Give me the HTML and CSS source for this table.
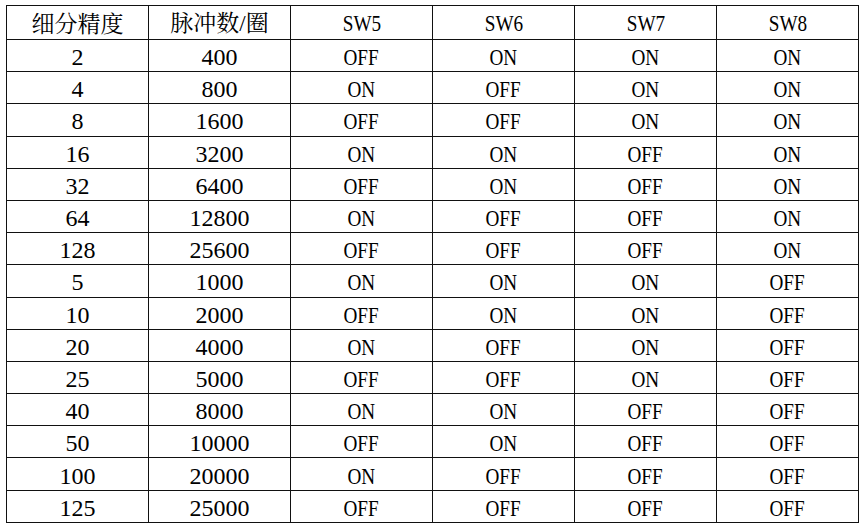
FILE: index.html
```html
<!DOCTYPE html>
<html>
<head>
<meta charset="utf-8">
<title>细分精度表</title>
<link rel="stylesheet" href="styles.css">
</head>
<body>
<table class="grid">
  <colgroup><col><col><col><col><col><col></colgroup>
  <thead>
    <tr class="head"><th class="zh">细分精度</th><th class="zh">脉冲数<span class="sl">/</span>圈</th><th><span class="c">SW5</span></th><th><span class="c">SW6</span></th><th><span class="c">SW7</span></th><th><span class="c">SW8</span></th></tr>
  </thead>
  <tbody>
    <tr><td>2</td><td>400</td><td><span class="c">OFF</span></td><td><span class="c">ON</span></td><td><span class="c">ON</span></td><td><span class="c">ON</span></td></tr>
    <tr><td>4</td><td>800</td><td><span class="c">ON</span></td><td><span class="c">OFF</span></td><td><span class="c">ON</span></td><td><span class="c">ON</span></td></tr>
    <tr><td>8</td><td>1600</td><td><span class="c">OFF</span></td><td><span class="c">OFF</span></td><td><span class="c">ON</span></td><td><span class="c">ON</span></td></tr>
    <tr><td>16</td><td>3200</td><td><span class="c">ON</span></td><td><span class="c">ON</span></td><td><span class="c">OFF</span></td><td><span class="c">ON</span></td></tr>
    <tr><td>32</td><td>6400</td><td><span class="c">OFF</span></td><td><span class="c">ON</span></td><td><span class="c">OFF</span></td><td><span class="c">ON</span></td></tr>
    <tr><td>64</td><td>12800</td><td><span class="c">ON</span></td><td><span class="c">OFF</span></td><td><span class="c">OFF</span></td><td><span class="c">ON</span></td></tr>
    <tr><td>128</td><td>25600</td><td><span class="c">OFF</span></td><td><span class="c">OFF</span></td><td><span class="c">OFF</span></td><td><span class="c">ON</span></td></tr>
    <tr><td>5</td><td>1000</td><td><span class="c">ON</span></td><td><span class="c">ON</span></td><td><span class="c">ON</span></td><td><span class="c">OFF</span></td></tr>
    <tr><td>10</td><td>2000</td><td><span class="c">OFF</span></td><td><span class="c">ON</span></td><td><span class="c">ON</span></td><td><span class="c">OFF</span></td></tr>
    <tr><td>20</td><td>4000</td><td><span class="c">ON</span></td><td><span class="c">OFF</span></td><td><span class="c">ON</span></td><td><span class="c">OFF</span></td></tr>
    <tr><td>25</td><td>5000</td><td><span class="c">OFF</span></td><td><span class="c">OFF</span></td><td><span class="c">ON</span></td><td><span class="c">OFF</span></td></tr>
    <tr><td>40</td><td>8000</td><td><span class="c">ON</span></td><td><span class="c">ON</span></td><td><span class="c">OFF</span></td><td><span class="c">OFF</span></td></tr>
    <tr><td>50</td><td>10000</td><td><span class="c">OFF</span></td><td><span class="c">ON</span></td><td><span class="c">OFF</span></td><td><span class="c">OFF</span></td></tr>
    <tr><td>100</td><td>20000</td><td><span class="c">ON</span></td><td><span class="c">OFF</span></td><td><span class="c">OFF</span></td><td><span class="c">OFF</span></td></tr>
    <tr><td>125</td><td>25000</td><td><span class="c">OFF</span></td><td><span class="c">OFF</span></td><td><span class="c">OFF</span></td><td><span class="c">OFF</span></td></tr>
  </tbody>
</table>
</body>
</html>
```

FILE: styles.css
```css
html, body {
  margin: 0;
  padding: 0;
  background: #ffffff;
}
body {
  padding: 5px 0 0 6px;
  font-family: "Liberation Serif", "Noto Serif CJK SC", serif;
  color: #000000;
}
.grid {
  border-collapse: collapse;
  table-layout: fixed;
  width: 853px;
  border: 1px solid #111;
  box-shadow: 0 1px 0 #9a9a9a;
}
.grid col {
  width: 142px;
}
.grid th,
.grid td {
  border: 1px solid #111;
  padding: 0;
  text-align: center;
  vertical-align: middle;
  font-family: "Liberation Serif", "Noto Serif CJK SC", serif;
  font-size: 24px;
  font-weight: normal;
  line-height: 1;
}
.grid td {
  padding-top: 3px;
}
.head th {
  height: 33px;
}
.head .zh {
  font-family: "Noto Serif CJK SC", "Liberation Serif", serif;
  font-size: 23px;
}
.sl {
  font-family: "Liberation Serif", serif;
}
.grid tbody tr {
  height: 32.2px;
}
.c {
  display: inline-block;
  transform: scaleX(0.8);
}
```
